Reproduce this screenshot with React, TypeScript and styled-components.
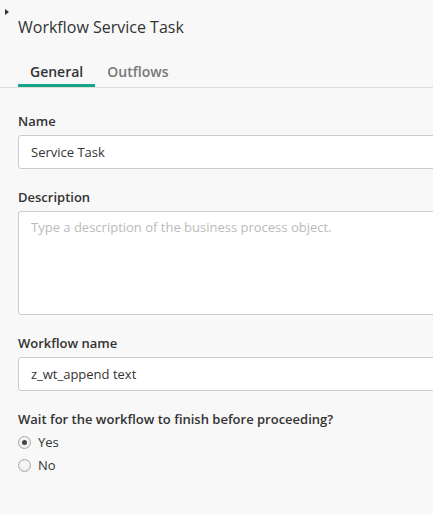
import React, { useState } from "react"
import styled, { createGlobalStyle } from "styled-components"

const GlobalStyle = createGlobalStyle`
html, body {
  margin: 0;
  padding: 0;
  background: #f8f8f8;
  overflow: hidden;
}
body {
  font-family: "Open Sans", "Liberation Sans", sans-serif;
  color: #333;
}
`

const Panel = styled.div`
  position: relative;
  width: 433px;
  height: 515px;
  overflow: hidden;
  background: #f8f8f8;
`

const Handle = styled.span`
  position: absolute;
  left: 5px;
  top: 9px;
  width: 0;
  height: 0;
  border-top: 3.5px solid transparent;
  border-bottom: 3.5px solid transparent;
  border-left: 4px solid #333;
`

const Header = styled.h1`
  margin: 0;
  padding: 15px 0 0 18px;
  font-size: 16px;
  line-height: 24px;
  font-weight: 400;
  color: #333;
`

const TabList = styled.div`
  display: flex;
  margin-top: 23px;
  padding-left: 18px;
  border-bottom: 1px solid #dddddd;
`

const Tab = styled.button<{ $active?: boolean }>`
  appearance: none;
  background: none;
  border: none;
  border-bottom: 3px solid ${(p) => (p.$active ? "#17a589" : "transparent")};
  margin: 0;
  padding: 0 12px 2px;
  font-family: inherit;
  font-size: 14px;
  line-height: 20px;
  font-weight: 600;
  color: ${(p) => (p.$active ? "#333" : "#777")};
  cursor: pointer;
`

const Form = styled.div`
  display: flex;
  flex-direction: column;
  gap: 19px;
  padding: 24px 0 0 18px;
`

const Field = styled.div`
  display: flex;
  flex-direction: column;
  gap: 5px;
`

const Label = styled.label`
  font-size: 13px;
  line-height: 18px;
  font-weight: 600;
  color: #333;
`

const TextInput = styled.input`
  box-sizing: border-box;
  width: 440px;
  height: 34px;
  padding: 7px 12px;
  border: 1px solid #cccccc;
  border-radius: 3px;
  background: #fff;
  font-family: inherit;
  font-size: 13px;
  line-height: 18px;
  color: #333;
  outline: none;
`

const TextArea = styled.textarea`
  box-sizing: border-box;
  width: 440px;
  height: 104px;
  padding: 6px 12px;
  border: 1px solid #cccccc;
  border-radius: 3px;
  background: #fff;
  font-family: inherit;
  font-size: 13px;
  line-height: 18px;
  color: #333;
  resize: none;
  outline: none;
  &::placeholder {
    color: #bbbbbb;
  }
`

const RadioGroup = styled.div`
  display: flex;
  flex-direction: column;
  margin-top: -3px;
`

const RadioRow = styled.label`
  display: flex;
  align-items: center;
  gap: 7px;
  height: 23px;
  font-size: 13px;
  color: #333;
  cursor: pointer;
`

const RadioDot = styled.span<{ $checked?: boolean }>`
  box-sizing: border-box;
  width: 13px;
  height: 13px;
  margin-top: 2px;
  border-radius: 50%;
  border: 1px solid #a8a8a8;
  background: radial-gradient(circle at 50% 40%, #fbfbfb 0%, #e6e6e6 100%);
  display: flex;
  align-items: center;
  justify-content: center;
  &::after {
    content: "";
    width: 5px;
    height: 5px;
    border-radius: 50%;
    background: ${(p) => (p.$checked ? "#444" : "transparent")};
  }
`

export default function App() {
  const [tab, setTab] = useState("general")
  const [wait, setWait] = useState(true)
  return (
    <>
      <GlobalStyle />
      <Panel>
        <Handle />
        <Header>Workflow Service Task</Header>
        <TabList>
          <Tab $active={tab === "general"} onClick={() => setTab("general")}>General</Tab>
          <Tab $active={tab === "outflows"} onClick={() => setTab("outflows")}>Outflows</Tab>
        </TabList>
        <Form>
          <Field>
            <Label>Name</Label>
            <TextInput defaultValue="Service Task" />
          </Field>
          <Field>
            <Label>Description</Label>
            <TextArea placeholder="Type a description of the business process object." />
          </Field>
          <Field>
            <Label>Workflow name</Label>
            <TextInput defaultValue="z_wt_append text" />
          </Field>
          <Field>
            <Label>Wait for the workflow to finish before proceeding?</Label>
            <RadioGroup>
              <RadioRow onClick={() => setWait(true)}>
                <RadioDot $checked={wait} />
                Yes
              </RadioRow>
              <RadioRow onClick={() => setWait(false)}>
                <RadioDot $checked={!wait} />
                No
              </RadioRow>
            </RadioGroup>
          </Field>
        </Form>
      </Panel>
    </>
  )
}
